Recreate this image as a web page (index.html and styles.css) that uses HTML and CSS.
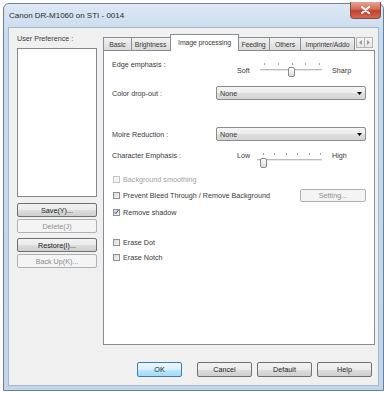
FILE: index.html
```html
<!doctype html>
<html>
  <head>
    <title>Canon DR-M1060 on STI - 0014</title>
    <link rel="stylesheet" href="styles.css">
  </head>
  <body>
    <div class="window">
      <div class="titlebar">
        <span class="title">Canon DR-M1060 on STI - 0014</span>
        <div class="close">
          <svg width="9" height="8" viewBox="0 0 9 8">
            <path d="M1 1 L8 7 M8 1 L1 7" stroke="#fff" stroke-width="2" stroke-linecap="round" />
          </svg>
        </div>
      </div>
      <div class="client">
        <div class="main">
          <div class="prefs">
            <div class="prefs-label">User Preference :</div>
            <div class="listbox"></div>
            <div class="btn-group">
              <div class="btn">Save(Y)...</div>
              <div class="btn disabled">Delete(J)</div>
            </div>
            <div class="btn-group">
              <div class="btn">Restore(I)...</div>
              <div class="btn disabled">Back Up(K)...</div>
            </div>
          </div>

          <div class="tabs">
            <div class="tab-strip">
              <div class="tab w-basic">Basic</div>
              <div class="tab w-bright">Brightness</div>
              <div class="tab selected w-image">Image processing</div>
              <div class="tab w-feed">Feeding</div>
              <div class="tab w-others">Others</div>
              <div class="tab w-imprint">Imprinter/Addo</div>
              <div class="tab-scroll">
                <div class="scroll-btn">
                  <svg width="3" height="5" viewBox="0 0 3 5"><polygon points="3,0 0,2.5 3,5" fill="#9a9a9a" /></svg>
                </div>
                <div class="scroll-btn">
                  <svg width="3" height="5" viewBox="0 0 3 5"><polygon points="0,0 3,2.5 0,5" fill="#9a9a9a" /></svg>
                </div>
              </div>
            </div>

            <div class="tab-panel">
              <div class="row row-edge">
                <span class="label w-slider-label">Edge emphasis :</span>
                <div class="slider-group">
                  <span class="slider-text w-soft">Soft</span>
                  <div class="slider slider-edge">
                    <div class="ticks">
                      <span></span><span></span><span></span><span></span><span></span>
                    </div>
                    <div class="track"></div>
                    <div class="thumb"></div>
                  </div>
                  <span class="slider-text">Sharp</span>
                </div>
              </div>

              <div class="row row-color">
                <span class="label w-combo-label">Color drop-out :</span>
                <div class="combo">
                  <span>None</span>
                  <svg width="5" height="3" viewBox="0 0 5 3"><polygon points="0,0 5,0 2.5,3" fill="#000" /></svg>
                </div>
              </div>

              <div class="row row-moire">
                <span class="label w-combo-label">Moire Reduction :</span>
                <div class="combo">
                  <span>None</span>
                  <svg width="5" height="3" viewBox="0 0 5 3"><polygon points="0,0 5,0 2.5,3" fill="#000" /></svg>
                </div>
              </div>

              <div class="row row-char">
                <span class="label w-slider-label">Character Emphasis :</span>
                <div class="slider-group">
                  <span class="slider-text w-low">Low</span>
                  <div class="slider slider-char">
                    <div class="ticks">
                      <span></span><span></span><span></span><span></span><span></span><span></span>
                    </div>
                    <div class="track"></div>
                    <div class="thumb"></div>
                  </div>
                  <span class="slider-text">High</span>
                </div>
              </div>

              <div class="row check-row row-bgsmooth disabled">
                <span class="checkbox"></span>
                <span>Background smoothing</span>
              </div>

              <div class="row check-row row-bleed">
                <span class="checkbox"></span>
                <span>Prevent Bleed Through / Remove Background</span>
                <div class="btn disabled setting">Setting...</div>
              </div>

              <div class="row check-row row-shadow">
                <span class="checkbox checked">
                  <svg width="6" height="6" viewBox="0 0 6 6">
                    <path d="M0.8 3.2 L2.3 4.8 L5.3 0.8" fill="none" stroke="#2a4a8a" stroke-width="1.2" />
                  </svg>
                </span>
                <span>Remove shadow</span>
              </div>

              <div class="row check-row row-dot">
                <span class="checkbox"></span>
                <span>Erase Dot</span>
              </div>

              <div class="row check-row row-notch">
                <span class="checkbox"></span>
                <span>Erase Notch</span>
              </div>
            </div>
          </div>
        </div>

        <div class="footer">
          <div class="btn footer-btn default-btn w-ok">OK</div>
          <div class="btn footer-btn">Cancel</div>
          <div class="btn footer-btn">Default</div>
          <div class="btn footer-btn">Help</div>
        </div>
      </div>
    </div>
  </body>
</html>
```

FILE: styles.css
```css
body {
  margin: 0;
  padding: 3px 0 0 3px;
  width: 384px;
  height: 393px;
  box-sizing: border-box;
  overflow: hidden;
  background: #fff;
  font-family: "Liberation Sans", Arial, sans-serif;
  font-size: 7.2px;
  color: #383838;
}

/* window frame */
.window {
  width: 381px;
  height: 388px;
  box-sizing: border-box;
  border: 1px solid #6d7f94;
  border-radius: 6px 6px 0 0;
  background: linear-gradient(to bottom, #dce8f5 0px, #c9dbee 30px, #c2d5ea 100%);
  display: flex;
  flex-direction: column;
}

.titlebar {
  height: 24px;
  display: flex;
  align-items: flex-start;
  padding-left: 5px;
}
.title {
  font-size: 8px;
  color: #2a2a2a;
  margin-top: 7px;
}
.close {
  margin-left: auto;
  margin-right: 2px;
  width: 31px;
  height: 17px;
  margin-top: -2px;
  box-sizing: border-box;
  border: 1px solid #8a4a40;
  border-top: none;
  border-radius: 0 0 4px 4px;
  background: linear-gradient(to bottom, #e6a597 0%, #d26a55 45%, #c0412b 55%, #cf6a52 100%);
  display: flex;
  align-items: center;
  justify-content: center;
}

.client {
  flex: 1;
  margin: 0 5px 5px 5px;
  background: #f0f0f0;
  box-shadow: 0 0 0 1px #a5b7cb;
  display: flex;
  flex-direction: column;
}

.main {
  display: flex;
  padding: 6px 0 0 8px;
}

/* left column */
.prefs {
  width: 80px;
}
.prefs-label {
  line-height: 10px;
  height: 10px;
}
.listbox {
  margin-top: 4px;
  height: 149px;
  box-sizing: border-box;
  border: 1px solid #828790;
  background: #fff;
}
.btn-group {
  display: flex;
  flex-direction: column;
  gap: 2px;
  margin-top: 6px;
}
.btn-group + .btn-group {
  margin-top: 5px;
}

.btn {
  height: 14px;
  box-sizing: border-box;
  border: 1px solid #707070;
  border-radius: 2px;
  background: linear-gradient(to bottom, #f2f2f2 0%, #ebebeb 50%, #dddddd 51%, #cfcfcf 100%);
  display: flex;
  align-items: center;
  justify-content: center;
  color: #222;
}
.btn.disabled {
  border-color: #adb2b5;
  background: #f4f4f4;
  color: #8d8d8d;
}

/* tabs */
.tabs {
  margin-left: 6px;
  width: 272px;
}
.tab-strip {
  height: 16px;
  display: flex;
  align-items: flex-end;
  position: relative;
  z-index: 1;
  font-size: 6.9px;
  letter-spacing: -0.1px;
}
.tab {
  height: 13px;
  box-sizing: border-box;
  border: 1px solid #898c95;
  border-bottom: none;
  margin-right: -1px;
  background: linear-gradient(to bottom, #f3f3f3, #e3e3e3 60%, #dadada);
  display: flex;
  align-items: center;
  justify-content: center;
  white-space: nowrap;
}
.tab.selected {
  height: 17px;
  margin: 0 -2px -1px -2px;
  padding-bottom: 1px;
  background: #fff;
  position: relative;
  z-index: 2;
}
.w-basic { width: 29px; }
.w-bright { width: 42px; padding-right: 3px; }
.w-image { width: 69px; }
.w-feed { width: 33px; }
.w-others { width: 32px; }
.w-imprint { width: 55px; }

.tab-scroll {
  display: flex;
  margin-left: 2px;
  margin-bottom: 2px;
}
.scroll-btn {
  width: 9px;
  height: 11px;
  box-sizing: border-box;
  border: 1px solid #b5b5b5;
  background: linear-gradient(to bottom, #f6f6f6, #e6e6e6);
  display: flex;
  align-items: center;
  justify-content: center;
}
.scroll-btn + .scroll-btn {
  margin-left: -1px;
}

.tab-panel {
  height: 295px;
  box-sizing: border-box;
  border: 1px solid #898c95;
  background: #fff;
  padding: 7px 8px 0 8px;
}

/* panel rows */
.row {
  display: flex;
  align-items: center;
}
.label {
  flex: none;
}
.w-slider-label { width: 125px; }
.w-combo-label { width: 104px; }

.row-edge {
  height: 24px;
  align-items: flex-start;
}
.row-edge .label {
  line-height: 14px;
}
.row-color {
  margin-top: 4px;
  height: 14px;
}
.row-moire {
  margin-top: 27px;
  height: 14px;
}
.row-char {
  margin-top: 5px;
  height: 18px;
}
.row-bgsmooth {
  margin-top: 9px;
  height: 12px;
}
.row-bleed {
  margin-top: 4px;
  height: 13px;
}
.row-shadow {
  margin-top: 4px;
  height: 12px;
}
.row-dot {
  margin-top: 18px;
  height: 12px;
}
.row-notch {
  margin-top: 3px;
  height: 12px;
}

.slider-group {
  display: flex;
  align-items: center;
  height: 100%;
}
.w-soft { width: 23px; }
.w-low { width: 20px; }
.slider {
  position: relative;
  height: 100%;
  margin-right: 10px;
}
.slider-edge { width: 62px; }
.slider-char { width: 65px; }

.ticks {
  position: absolute;
  display: flex;
  justify-content: space-between;
}
.ticks span {
  width: 1px;
  height: 2px;
  background: #a8a8a8;
}
.track {
  position: absolute;
  left: 0;
  right: 0;
  height: 1px;
  border-top: 1px solid #bcbcbc;
  background: #e8e8e8;
}
.thumb {
  position: absolute;
  width: 7px;
  height: 10px;
  box-sizing: border-box;
  border: 1px solid #8b8b8b;
  border-radius: 2px;
  background: linear-gradient(to bottom, #fdfdfd, #dedede);
}
.slider-edge .ticks { top: 5px; left: 4px; right: 2px; }
.slider-edge .track { top: 11px; }
.slider-edge .thumb { top: 9px; left: 28px; }
.slider-char .ticks { top: 7px; left: 6px; right: 1px; }
.slider-char .track { top: 13px; }
.slider-char .thumb { top: 12px; left: 3px; }

.combo {
  width: 151px;
  height: 14px;
  box-sizing: border-box;
  border: 1px solid #8c8c8c;
  border-radius: 2px;
  background: linear-gradient(to bottom, #f4f4f4 0%, #ececec 50%, #dfdfdf 51%, #d5d5d5 100%);
  display: flex;
  align-items: center;
  justify-content: space-between;
  padding: 0 3px 0 3px;
}

/* checkboxes */
.check-row {
  gap: 3px;
}
.checkbox {
  width: 7px;
  height: 7px;
  margin-left: 1px;
  box-sizing: border-box;
  border: 1px solid #8e8f8f;
  background: linear-gradient(135deg, #d8d8d8, #f6f6f6);
  display: flex;
  align-items: center;
  justify-content: center;
}
.check-row.disabled {
  color: #a0a0a0;
}
.check-row.disabled .checkbox {
  border-color: #c4c4c4;
  background: #f4f4f4;
}
.setting {
  margin-left: auto;
  width: 66px;
  height: 13px;
}

/* dialog buttons */
.footer {
  display: flex;
  justify-content: flex-end;
  gap: 5px;
  padding-right: 6px;
  margin-top: 17px;
}
.footer-btn {
  width: 55px;
  height: 15px;
}
.default-btn {
  border-color: #3c7fb1;
  background: linear-gradient(to bottom, #eaf6fd 0%, #d9f0fc 50%, #bee6fd 51%, #a7d9f5 100%);
  margin-right: 10px;
}
.w-ok { width: 45px; }
```
